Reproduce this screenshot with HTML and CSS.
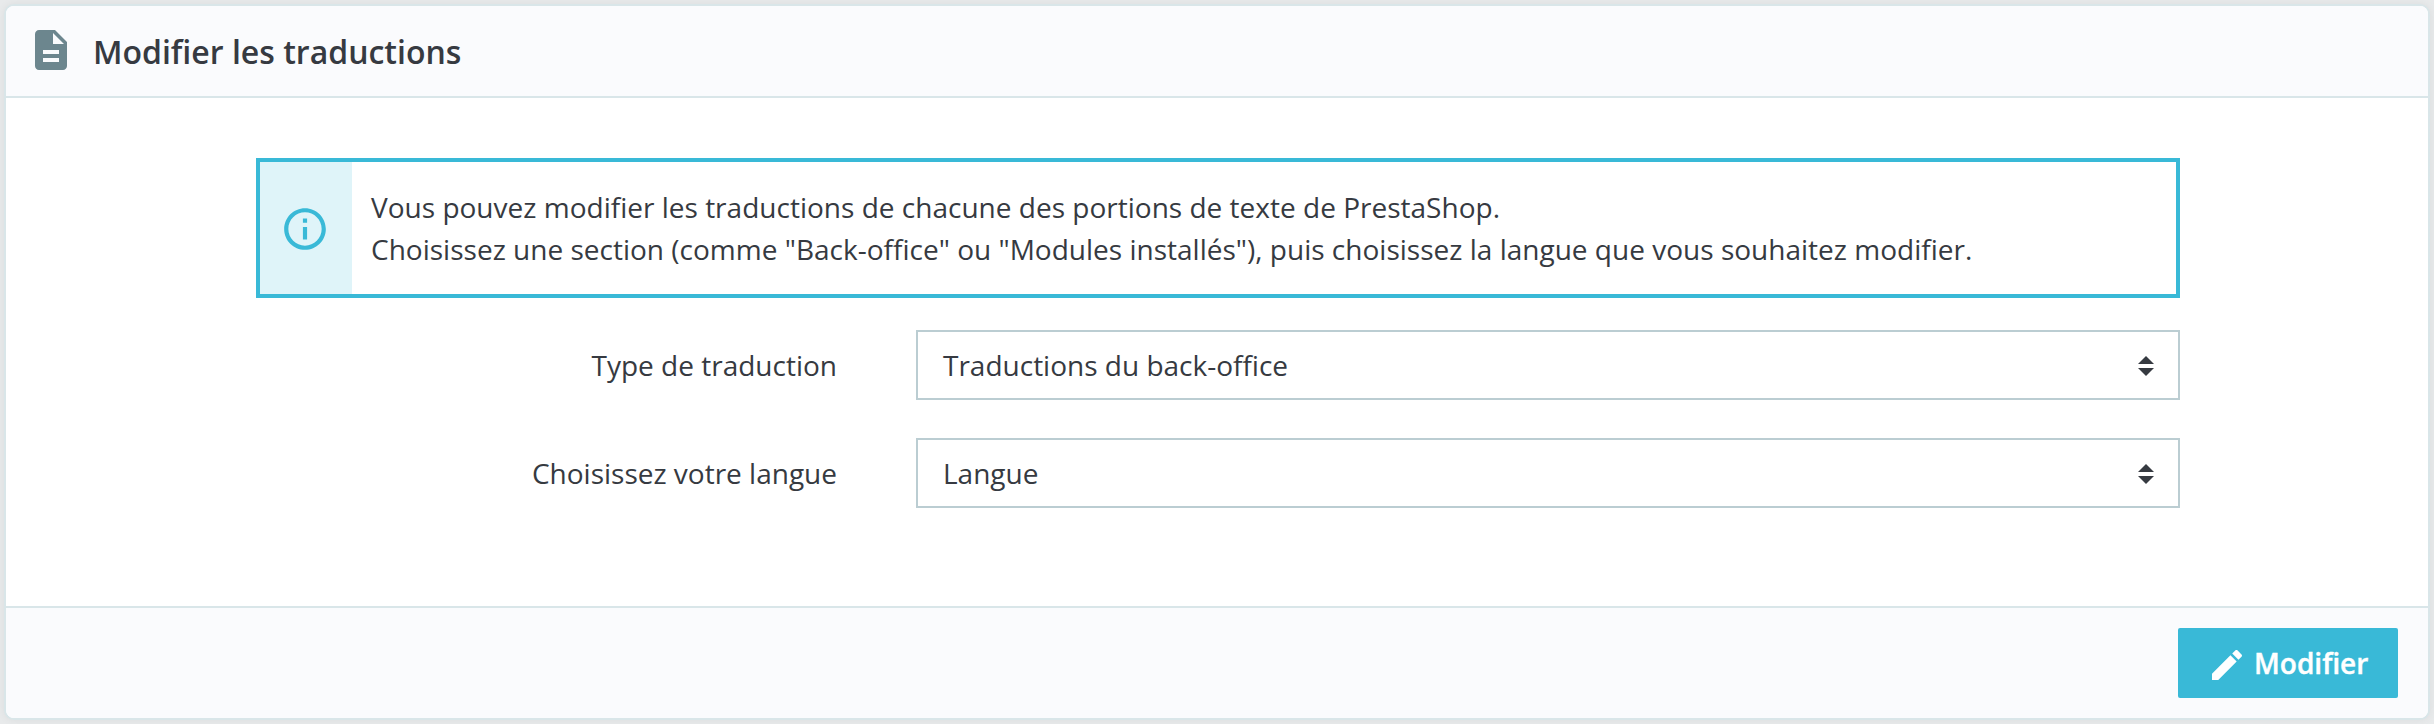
FILE: index.html
```html
<!DOCTYPE html>
<html lang="fr">
<head>
<meta charset="utf-8">
<title>Modifier les traductions</title>
<link rel="stylesheet" href="styles.css">
</head>
<body>
<form class="card">
  <h3 class="card-header">
    <svg class="icon-doc" viewBox="0 0 24 24"><path d="M14 2H6c-1.100 0-1.990.9-1.990 2L4 20c0 1.100.89 2 1.990 2H18c1.100 0 2-.9 2-2V8l-6-6zm2 16H8v-2h8v2zm0-4H8v-2h8v2zm-3-5V3.500L18.500 9H13z"/></svg>
    <span class="title">Modifier les traductions</span>
  </h3>
  <div class="card-body">
    <div class="alert">
      <div class="alert-icon">
        <svg class="icon-info" viewBox="0 0 24 24"><path d="M11 17h2v-6h-2v6zm1-15C6.480 2 2 6.480 2 12s4.480 10 10 10 10-4.480 10-10S17.520 2 12 2zm0 18c-4.410 0-8-3.590-8-8s3.590-8 8-8 8 3.590 8 8-3.590 8-8 8zM11 9h2V7h-2v2z"/></svg>
      </div>
      <p class="alert-text">Vous pouvez modifier les traductions de chacune des portions de texte de PrestaShop.<br>Choisissez une section (comme "Back-office" ou "Modules installés"), puis choisissez la langue que vous souhaitez modifier.</p>
    </div>
    <div class="form-row">
      <div class="label">Type de traduction</div>
      <div class="select"><span>Traductions du back-office</span><svg class="arrows" viewBox="0 0 16 20"><path d="M0 8L8 0l8 8zM0 12h16l-8 8z"/></svg></div>
    </div>
    <div class="form-row">
      <div class="label">Choisissez votre langue</div>
      <div class="select"><span>Langue</span><svg class="arrows" viewBox="0 0 16 20"><path d="M0 8L8 0l8 8zM0 12h16l-8 8z"/></svg></div>
    </div>
  </div>
  <div class="card-footer">
    <button class="btn" type="button">
      <svg class="icon-edit" viewBox="0 0 24 24"><path d="M3 17.250V21h3.750L17.810 9.940l-3.750-3.750L3 17.250zM20.710 7.040c.39-.39.39-1.020 0-1.410l-2.340-2.340c-.39-.39-1.020-.39-1.410 0l-1.830 1.830 3.750 3.750 1.830-1.830z"/></svg>
      <span>Modifier</span>
    </button>
  </div>
</form>
</body>
</html>
```
FILE: styles.css
```css
* { box-sizing: border-box; }

body {
  margin: 0;
  height: 724px;
  padding: 4px;
  overflow: hidden;
  background: #e8eaeb;
  color: #363a41;
  font: 28px/42px "Open Sans", "Noto Sans", sans-serif;
}

svg { display: block; flex: none; fill: currentColor; }

.card {
  display: flex;
  flex-direction: column;
  height: 716px;
  background: #fff;
  border: 2px solid #d9e6e9;
  border-radius: 10px;
  box-shadow: 0 0 8px rgba(0, 0, 0, 0.06);
}

.card-header {
  display: flex;
  align-items: center;
  height: 92px;
  margin: 0;
  padding: 0 21px;
  gap: 18px;
  background: #fafbfd;
  border-bottom: 2px solid #d9e6e9;
  border-radius: 8px 8px 0 0;
  font-size: 32px;
  font-weight: 600;
}

.icon-doc { width: 48px; height: 48px; margin-bottom: 2px; color: #6c868e; }
.title { padding-top: 1px; }

.card-body { flex: 1; padding: 60px 248px 0 250px; }

.alert {
  display: flex;
  height: 140px;
  margin-bottom: 32px;
  border: 4px solid #39b9d7;
}

.alert-icon {
  display: flex;
  align-items: center;
  width: 96px;
  flex: 0 0 92px;
  padding-left: 20px;
  background: #dff4f9;
  color: #39b9d7;
}

.icon-info { width: 50px; height: 50px; margin-top: 2px; }
.alert-text { margin: 0; padding: 24px 0 24px 19px; letter-spacing: 0.01px; }

.form-row {
  display: flex;
  align-items: center;
  height: 70px;
  margin-bottom: 38px;
  gap: 79px;
}

.label { width: 581px; text-align: right; }

.select {
  display: flex;
  flex: 1;
  align-items: center;
  justify-content: space-between;
  height: 70px;
  padding: 0 24px 0 25px;
  border: 2px solid #bbcdd2;
}

.arrows { width: 16px; height: 20px; margin-top: 2px; }

.card-footer {
  display: flex;
  justify-content: flex-end;
  height: 112px;
  padding: 20px 30px 0;
  background: #fafbfd;
  border-top: 2px solid #d9e6e9;
  border-radius: 0 0 8px 8px;
}

.btn {
  display: flex;
  align-items: center;
  width: 220px;
  height: 70px;
  padding: 0 0 0 29px;
  gap: 7px;
  border: 0;
  border-radius: 2px;
  background: #39b9d7;
  color: #fff;
  font: inherit;
  font-weight: 600;
  -webkit-text-stroke: 0.4px #fff;
}

.icon-edit { width: 40px; height: 40px; margin-top: 3px; }
```
